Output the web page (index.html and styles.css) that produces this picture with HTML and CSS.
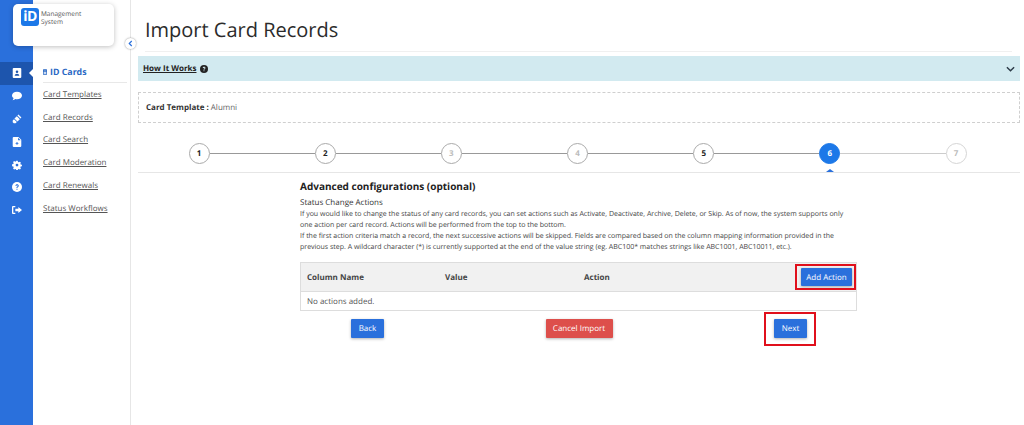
FILE: index.html
```html
<!DOCTYPE html>
<html lang="en">
<head>
<meta charset="utf-8">
<title>Import Card Records</title>
<link rel="stylesheet" href="styles.css">
</head>
<body>
<div class="app">
  <nav class="rail">
    <a class="rail-item active"><svg viewBox="0 0 12 14" class="ri"><path fill-rule="evenodd" d="M1.5 0h9A1.5 1.5 0 0 1 12 1.5v11a1.5 1.5 0 0 1-1.5 1.500h-9A1.500 1.500 0 0 1 0 12.500v-11A1.500 1.500 0 0 1 1.500 0zM6 3.500a1.800 1.800 0 1 0 0 3.600 1.800 1.800 0 0 0 0-3.600zM2.800 10.800h6.400C9.200 9 7.800 8 6 8s-3.200 1-3.200 2.800z"/></svg></a>
    <a class="rail-item"><svg viewBox="0 0 14 12" class="ri"><path d="M7 0c3.900 0 7 2.300 7 5.200s-3.100 5.200-7 5.200c-.8 0-1.500-.1-2.200-.3C3.800 11 2.400 11.700.8 11.800c.8-.8 1.300-1.800 1.400-2.900C.8 8 0 6.700 0 5.200 0 2.300 3.100 0 7 0z"/></svg></a>
    <a class="rail-item"><svg viewBox="0 0 14 14" class="ri"><path d="M9 .8l4.200 4.200-1.400 1.400L7.600 2.200zM6.800 3l4.200 4.200-3.400 3.400-4.200-4.200zM2.800 7.200l4 4-1.800 1.800H2.500L1 11.500V9z"/></svg></a>
    <a class="rail-item"><svg viewBox="0 0 12 14" class="ri"><path fill-rule="evenodd" d="M1.500 0H8l4 4v8.500a1.500 1.500 0 0 1-1.500 1.500h-9A1.500 1.500 0 0 1 0 12.500v-11A1.500 1.500 0 0 1 1.500 0zM7.500 1v3.500H11zM5.300 7v1.500H4v1h1.300V11h1.400V9.500H8v-1H6.700V7z"/></svg></a>
    <a class="rail-item"><svg viewBox="-1 0 16 14" class="ri"><path fill-rule="evenodd" d="M5.800 0h2.400l.4 2 1.200.6 1.800-1 1.700 1.700-1 1.800.6 1.200 2 .4v2.400l-2 .4-.6 1.200 1 1.800-1.700 1.700-1.800-1-1.200.6-.4 2H5.800l-.4-2-1.200-.6-1.800 1L.7 12.500l1-1.800-.6-1.200-2-.4V5.700l2-.4.600-1.200-1-1.800L2.400.6l1.800 1 1.200-.6zM7 4.800a2.200 2.200 0 1 0 0 4.400 2.200 2.200 0 0 0 0-4.400z"/></svg></a>
    <a class="rail-item"><svg viewBox="0 0 14 14" class="ri"><circle cx="7" cy="7" r="7"/><path d="M4.700 5.400C4.800 4 5.800 3.200 7.100 3.200c1.400 0 2.400.9 2.400 2.100 0 1-.6 1.500-1.300 2-.5.300-.6.500-.6 1H6.200c0-1 .3-1.400 1-1.900.5-.3.800-.6.800-1 0-.5-.4-.8-.9-.8-.6 0-1 .3-1 .9zM6.200 9.300h1.500v1.500H6.200z" fill="#2a70dc"/></svg></a>
    <a class="rail-item"><svg viewBox="0 0 15 12" class="ri"><path d="M5 0v1.800H2V10h3v2H1.500A1.500 1.500 0 0 1 0 10.500v-9A1.500 1.500 0 0 1 1.500 0zM9.500 1.500L15 6l-5.500 4.500V8H5V4h4.500z"/></svg></a>
  </nav>

  <aside class="subnav">
    <div class="logo-card">
      <span class="logo-mark">iD</span>
      <span class="logo-text">Management<br>System</span>
    </div>
    <button class="collapse" aria-label="Collapse"><svg viewBox="0 0 6 8" class="collapse-icon"><path d="M4.500 1L1.500 4l3 3"/></svg></button>
    <div class="subnav-title"><svg viewBox="0 0 6 8" class="title-icon"><path fill-rule="evenodd" d="M.8 0h4.400a.8.800 0 0 1 .8.800v6.400a.8.800 0 0 1-.8.800H.8A.8.800 0 0 1 0 7.200V.8A.8.800 0 0 1 .8 0zM1 2v1h4V2zm0 2v1h4V4zm0 1.600v1h4v-1z"/></svg>ID Cards</div>
    <ul class="subnav-list">
      <li><a>Card Templates</a></li>
      <li><a>Card Records</a></li>
      <li><a>Card Search</a></li>
      <li><a>Card Moderation</a></li>
      <li><a>Card Renewals</a></li>
      <li><a>Status Workflows</a></li>
    </ul>
  </aside>

  <main class="main">
    <h1 class="page-title">Import Card Records</h1>
    <div class="banner">
      <span class="banner-label"><a>How It Works</a>
        <svg viewBox="0 0 14 14" class="help"><circle cx="7" cy="7" r="7"/><path d="M4.700 5.400C4.800 4 5.800 3.200 7.100 3.200c1.400 0 2.400.9 2.400 2.100 0 1-.6 1.500-1.300 2-.5.300-.6.500-.6 1H6.200c0-1 .3-1.400 1-1.900.5-.3.800-.6.800-1 0-.5-.4-.8-.9-.8-.6 0-1 .3-1 .9zM6.200 9.300h1.500v1.500H6.200z" fill="#d2eaf0"/></svg>
      </span>
      <svg viewBox="0 0 10 6" class="chevron"><path d="M1 1l4 4 4-4"/></svg>
    </div>
    <div class="template-box"><b>Card Template :</b> Alumni</div>

    <div class="stepper">
      <span class="step done">1</span><i class="bar"></i>
      <span class="step done">2</span><i class="bar"></i>
      <span class="step muted">3</span><i class="bar"></i>
      <span class="step muted">4</span><i class="bar"></i>
      <span class="step done">5</span><i class="bar"></i>
      <span class="step current">6</span><i class="bar light"></i>
      <span class="step future">7</span>
    </div>

    <section class="panel">
      <h2 class="panel-title">Advanced configurations (optional)</h2>
      <h3 class="panel-sub">Status Change Actions</h3>
      <p class="panel-text">If you would like to change the status of any card records, you can set actions such as Activate, Deactivate, Archive, Delete, or Skip. As of now, the system supports only one action per card record. Actions will be performed from the top to the bottom.<br>If the first action criteria match a record, the next successive actions will be skipped. Fields are compared based on the column mapping information provided in the previous step. A wildcard character (*) is currently supported at the end of the value string (eg. ABC100* matches strings like ABC1001, ABC10011, etc.).</p>
      <div class="table">
        <div class="table-head">
          <span class="col-name">Column Name</span>
          <span class="col-value">Value</span>
          <span class="col-action">Action</span>
          <button class="btn primary add highlight">Add Action</button>
        </div>
        <div class="table-row">No actions added.</div>
      </div>
      <div class="actions">
        <button class="btn primary">Back</button>
        <button class="btn danger">Cancel Import</button>
        <button class="btn primary next highlight">Next</button>
      </div>
    </section>
  </main>
</div>
</body>
</html>
```
FILE: styles.css
```css
* { box-sizing: border-box; }
html, body { margin: 0; height: 100%; }
body { font-family: "Open Sans", "Liberation Sans", sans-serif; color: #333; background: #fff; overflow: hidden; text-rendering: geometricPrecision; }
button { text-rendering: geometricPrecision; }
a { color: inherit; }
.app { display: flex; height: 425px; }

.rail { width: 33px; flex: none; background: #2a70dc; padding-top: 62px; display: flex; flex-direction: column; }
.rail-item { height: 22.800px; display: flex; align-items: center; justify-content: center; position: relative; }
.rail-item.active { background: #1d55ad; }
.rail-item.active::after { content: ""; position: absolute; right: 0; top: 7px; border: 4px solid transparent; border-left: 0; border-right-color: #fff; }
.ri { width: 10px; height: 10px; fill: #fff; }

.subnav { width: 98px; flex: none; border-right: 1px solid #e6e6e6; position: relative; padding: 62px 3px 0 8px; }
.logo-card { position: absolute; left: -20px; top: 4px; width: 101px; height: 42px; background: #fff; border-radius: 5px; box-shadow: 0 1px 5px rgba(0,0,0,.25); display: flex; align-items: flex-start; padding: 4px 0 0 8px; gap: 2px; }
.logo-mark { width: 18px; height: 18px; background: #1c78e8; color: #fff; border-radius: 3px; font-weight: 700; font-size: 14px; line-height: 18px; text-align: center; letter-spacing: -.5px; }
.logo-text { font-size: 6.500px; line-height: 8px; color: #555; margin-top: 2px; }
.collapse { position: absolute; right: -6px; top: 38px; width: 11px; height: 11px; padding: 0; border-radius: 50%; background: #fff; border: 0; box-shadow: 0 0 2px rgba(0,0,0,.45); display: flex; align-items: center; justify-content: center; }
.collapse-icon { width: 5px; height: 7px; fill: none; stroke: #2a70dc; stroke-width: 1.400; }
.subnav-title { height: 21px; font-size: 8.800px; font-weight: 700; color: #2a68c4; border-bottom: 1px solid #e8e8e8; display: flex; align-items: center; gap: 3px; margin-left: 2px; padding-bottom: 1px; }
.title-icon { width: 4px; height: 6px; fill: #2a68c4; }
.subnav-list { list-style: none; margin: 0; padding: 0 0 0 2px; }
.subnav-list li { height: 22.800px; display: flex; align-items: center; font-size: 8px; color: #555; }
.subnav-list a { text-decoration: underline; }

.main { flex: 1; min-width: 0; padding: 0 4px 0 7px; }
.page-title { margin: 0 8px 4px 7px; height: 52px; padding-top: 15px; font-size: 20px; line-height: 30px; font-weight: 400; color: #2b2b2b; border-bottom: 1px solid #f0f0f0; }
.banner { height: 25px; background: #d2eaf0; display: flex; align-items: center; justify-content: space-between; padding: 0 5px; font-size: 8px; font-weight: 700; color: #222; }
.banner-label { display: flex; align-items: center; gap: 4px; }
.banner-label a { text-decoration: underline; }
.help { width: 8px; height: 8px; fill: #222; }
.chevron { width: 9px; height: 6px; fill: none; stroke: #2c3a47; stroke-width: 1.600; }
.template-box { height: 31px; margin-top: 11px; border: 1px dashed #cfcfcf; padding: 0 7px; display: flex; align-items: center; gap: 2px; font-size: 8px; color: #666; }
.template-box b { color: #333; }

.stepper { height: 50px; padding: 20px 53.500px 0 50.500px; border-bottom: 1px solid #e6e6e6; display: flex; align-items: flex-start; }
.step { width: 21px; height: 21px; flex: none; border-radius: 50%; border: 1px solid #aaa; background: #fff; font-size: 8px; font-weight: 700; line-height: 19px; text-align: center; color: #222; }
.step.muted { color: #bbb; }
.step.future { color: #bbb; border-color: #d5d5d5; }
.step.current { background: #1c78e8; border-color: #1c78e8; color: #fff; position: relative; }
.step.current::after { content: ""; position: absolute; left: 6px; top: 25px; border: 4px solid transparent; border-top: 0; border-bottom: 3px solid #2a70dc; }
.bar { flex: 1; height: 1px; margin-top: 10px; background: #999; }
.bar.light { background: #ccc; }

.panel { margin-left: 162px; width: 557px; }
.panel-title { margin: 6px 0 0; font-size: 10px; line-height: 15px; font-weight: 700; color: #222; }
.panel-sub { margin: 2px 0 0; font-size: 8px; line-height: 13px; font-weight: 400; color: #333; }
.panel-text { margin: 0; padding-right: 8px; font-size: 7px; line-height: 11px; color: #444; }
.table { margin-top: 9px; border: 1px solid #ddd; }
.table-head { height: 29px; background: #f1f1f1; border-bottom: 1px solid #ddd; display: flex; align-items: center; font-size: 8px; font-weight: 700; color: #444; padding: 0 4px 0 6px; }
.col-name { width: 138px; }
.col-value { width: 139px; }
.col-action { flex: 1; }
.table-row { height: 18px; display: flex; align-items: center; padding-left: 6px; font-size: 8px; color: #555; }
.btn { font-family: inherit; font-size: 8px; color: #fff; border: 0; border-radius: 1px; height: 19px; padding: 0; box-shadow: 0 1px 3px rgba(0,0,0,.3); }
.primary { background: #2a70dc; }
.danger { background: #dd4f4b; width: 67px; }
.add { width: 51px; height: 18px; }
.actions { display: flex; justify-content: space-between; margin-top: 8px; padding: 0 50px 0 51px; }
.actions .primary { width: 33px; }
.highlight { position: relative; }
.highlight::after { content: ""; position: absolute; border: 2px solid #e0101c; }
.add.highlight::after { inset: -4px -4px -4px -6px; }
.next.highlight::after { inset: -7px -9px -8px -10px; }
```
